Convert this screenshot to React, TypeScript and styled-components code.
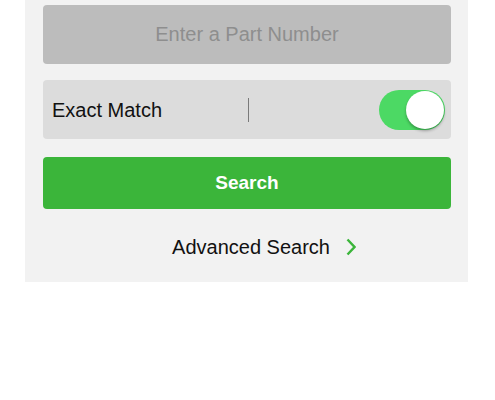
import React, { useState } from "react";
import styled, { createGlobalStyle } from "styled-components";

const GlobalStyle = createGlobalStyle`
  html, body {
    margin: 0;
    padding: 0;
    background: #ffffff;
    font-family: "Liberation Sans", Arial, sans-serif;
  }
`;

const Page = styled.div`
  width: 495px;
  height: 400px;
  background: #ffffff;
`;

const Panel = styled.div`
  width: 443px;
  margin-left: 25px;
  box-sizing: border-box;
  padding: 5px 17px 23px 18px;
  background: #f2f2f2;
  display: flex;
  flex-direction: column;
`;

const PartInput = styled.input`
  height: 59px;
  box-sizing: border-box;
  border: none;
  border-radius: 4px;
  background: #bcbcbc;
  text-align: center;
  font-family: "Liberation Sans", Arial, sans-serif;
  font-size: 20px;
  color: #333;
  outline: none;
  &::placeholder {
    color: #8e8e8e;
  }
`;

const MatchRow = styled.div`
  margin-top: 16px;
  height: 59px;
  border-radius: 4px;
  background: #dcdcdc;
  display: grid;
  grid-template-columns: 1fr 1px 1fr;
  align-items: center;
  padding: 1px 6px 0 9px;
  box-sizing: border-box;
`;

const RowLabel = styled.span`
  font-size: 20px;
  color: #111;
`;

const Divider = styled.span`
  width: 1px;
  height: 24px;
  background: #7a7a7a;
`;

const Toggle = styled.button<{ $on: boolean }>`
  justify-self: end;
  position: relative;
  width: 66px;
  height: 40px;
  padding: 0;
  border: none;
  border-radius: 20px;
  background: ${(p) => (p.$on ? "#4cd964" : "#e5e5e5")};
  cursor: pointer;
`;

const Knob = styled.span<{ $on: boolean }>`
  position: absolute;
  top: 1px;
  left: ${(p) => (p.$on ? "27px" : "1px")};
  width: 38px;
  height: 38px;
  border-radius: 50%;
  background: #ffffff;
  box-shadow: 0 2px 3px rgba(0, 0, 0, 0.3);
`;

const SearchButton = styled.button`
  margin-top: 18px;
  height: 52px;
  border: none;
  border-radius: 4px;
  background: #3bb53a;
  color: #ffffff;
  font-family: "Liberation Sans", Arial, sans-serif;
  font-size: 19px;
  font-weight: bold;
  cursor: pointer;
`;

const AdvancedLink = styled.a`
  margin-top: 26px;
  align-self: center;
  display: flex;
  align-items: center;
  gap: 16px;
  height: 24px;
  font-size: 20px;
  color: #111;
  text-decoration: none;
  cursor: pointer;
  padding-left: 34px;
`;

export default function App() {
  const [exact, setExact] = useState(true);

  return (
    <Page>
      <GlobalStyle />
      <Panel>
        <PartInput placeholder="Enter a Part Number" />
        <MatchRow>
          <RowLabel>Exact Match</RowLabel>
          <Divider />
          <Toggle $on={exact} onClick={() => setExact(!exact)}>
            <Knob $on={exact} />
          </Toggle>
        </MatchRow>
        <SearchButton>Search</SearchButton>
        <AdvancedLink>
          Advanced Search
          <svg width="10" height="18" viewBox="0 0 10 18">
            <path
              d="M1.5 1.5 L8.5 9 L1.5 16.5"
              fill="none"
              stroke="#3bb53a"
              strokeWidth="2.4"
            />
          </svg>
        </AdvancedLink>
      </Panel>
    </Page>
  );
}
